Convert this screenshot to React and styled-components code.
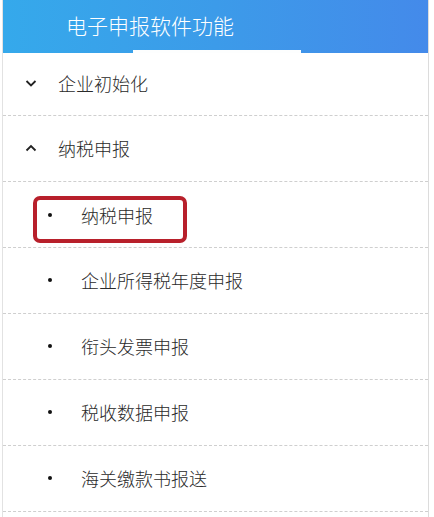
import React from "react";
import styled, { createGlobalStyle } from "styled-components";

const GlobalStyle = createGlobalStyle`
  body {
    margin: 0;
    background: #fff;
    font-family: "Liberation Serif", "Noto Sans CJK SC", serif;
  }
`;

const Panel = styled.div`
  width: 427px;
  margin-left: 2px;
  height: 517px;
  border-left: 1px solid #e2e2e2;
  border-right: 1px solid #dcdcdc;
  box-sizing: border-box;
  overflow: hidden;
`;

const Header = styled.div`
  position: relative;
  height: 53px;
  background: linear-gradient(90deg, #35a9eb 0%, #3c9be9 50%, #448aea 100%);
  color: #fff;
  font-size: 21px;
  display: flex;
  align-items: center;
  padding-left: 63px;
  padding-bottom: 4px;
  box-sizing: border-box;
  font-family: "Noto Sans CJK SC", sans-serif;
  font-weight: 300;
`;

const Indicator = styled.div`
  position: absolute;
  left: 130px;
  bottom: 0;
  width: 168px;
  height: 3px;
  background: #fdfefe;
`;

const Row = styled.div`
  height: ${({ $h }) => $h || 66}px;
  display: flex;
  align-items: center;
  padding-left: ${({ $sub }) => ($sub ? 44 : 21)}px;
  padding-bottom: 2px;
  border-bottom: 1px dashed #cfcfcf;
  box-sizing: border-box;
  color: #2a2a2a;
  font-size: 18px;
  font-family: "Noto Sans CJK SC", sans-serif;
  font-weight: 300;
`;

const Chevron = styled.svg`
  width: 14px;
  height: 14px;
  margin-right: 20px;
`;

const Bullet = styled.span`
  width: 4px;
  height: 4px;
  border-radius: 50%;
  background: #111;
  margin-right: 29px;
  margin-left: 1px;
`;

const Highlight = styled.div`
  display: flex;
  align-items: center;
  margin-left: -14px;
  margin-top: 12px;
  padding-left: 10px;
  padding-bottom: 10px;
  width: 154px;
  height: 47px;
  border: 4px solid #b8202b;
  border-radius: 7px;
  box-sizing: border-box;
`;

const Down = () => (
  <Chevron viewBox="0 0 14 14">
    <path d="M2.5 5 L7 9.5 L11.5 5" fill="none" stroke="#222" strokeWidth="1.8" />
  </Chevron>
);

const Up = () => (
  <Chevron viewBox="0 0 14 14">
    <path d="M2.5 9.5 L7 5 L11.5 9.5" fill="none" stroke="#222" strokeWidth="1.8" />
  </Chevron>
);

const subItems = ["企业所得税年度申报", "衔头发票申报", "税收数据申报", "海关缴款书报送"];

export default function App() {
  return (
    <>
      <GlobalStyle />
      <Panel>
        <Header>
          电子申报软件功能
          <Indicator />
        </Header>
        <Row $h={63}>
          <Down />
          企业初始化
        </Row>
        <Row>
          <Up />
          纳税申报
        </Row>
        <Row $sub>
          <Highlight>
            <Bullet />
            纳税申报
          </Highlight>
        </Row>
        {subItems.map((t) => (
          <Row $sub key={t}>
            <Bullet />
            {t}
          </Row>
        ))}
      </Panel>
    </>
  );
}
